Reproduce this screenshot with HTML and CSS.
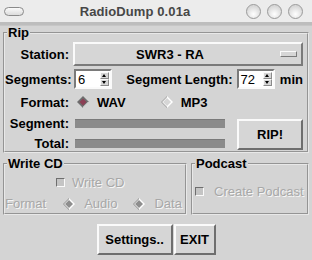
FILE: index.html
```html
<!DOCTYPE html>
<html lang="en">

<head>
    <meta charset="UTF-8">
    <title>RadioDump 0.01a</title>
    <link rel="stylesheet" href="styles.css">
</head>

<body>
    <div class="window">
        <div class="titlebar">
            <span class="pill"></span>
            <span class="title">RadioDump 0.01a</span>
            <span class="dots"><i></i><i></i><i></i></span>
        </div>
        <div class="band"></div>

        <div class="content">
            <fieldset class="group rip">
                <legend>Rip</legend>

                <div class="row station">
                    <span class="label">Station:</span>
                    <div class="combo">SWR3 - RA<span class="indicator"></span></div>
                </div>

                <div class="row segments">
                    <span class="label">Segments:</span>
                    <div class="spin small"><span class="val">6</span><span class="arrows"><b class="up"></b><b class="down"></b></span></div>
                    <span class="label seglen">Segment Length:</span>
                    <div class="spin"><span class="val">72</span><span class="arrows"><b class="up"></b><b class="down"></b></span></div>
                    <span class="label unit">min</span>
                </div>

                <div class="row format">
                    <span class="label">Format:</span>
                    <svg class="radio" width="12" height="12" viewBox="0 0 12 12">
                        <polygon points="6,0 12,6 6,12 0,6" fill="#6e6e6e" />
                        <polygon points="6,12 12,6 11,6 6,11" fill="#ffffff" />
                        <polygon points="6,2.5 9.5,6 6,9.5 2.5,6" fill="#8c3f55" />
                    </svg>
                    <span class="opt">WAV</span>
                    <svg class="radio mp3" width="12" height="12" viewBox="0 0 12 12">
                        <polygon points="6,0 12,6 6,12 0,6" fill="#ffffff" />
                        <polygon points="6,0 0,6 6,12 6,11 1,6 6,1" fill="#8a8a8a" />
                        <polygon points="6,2 10,6 6,10 2,6" fill="#d6d6d6" />
                    </svg>
                    <span class="opt">MP3</span>
                </div>

                <div class="progress">
                    <div class="bars">
                        <div class="row">
                            <span class="label">Segment:</span>
                            <div class="bar"></div>
                        </div>
                        <div class="row">
                            <span class="label">Total:</span>
                            <div class="bar"></div>
                        </div>
                    </div>
                    <div class="btn rip-btn">RIP!</div>
                </div>
            </fieldset>

            <div class="lower">
                <fieldset class="group cd">
                    <legend>Write CD</legend>
                    <div class="check-row center">
                        <span class="box"></span>
                        <span class="off">Write CD</span>
                    </div>
                    <div class="cd-format">
                        <span class="off">Format</span>
                        <svg class="radio" width="12" height="12" viewBox="0 0 12 12">
                            <polygon points="6,0 12,6 6,12 0,6" fill="#ffffff" />
                            <polygon points="6,0 0,6 6,12 6,11 1,6 6,1" fill="#7a7a7a" />
                            <polygon points="6,2 10,6 6,10 2,6" fill="#8e8e8e" />
                        </svg>
                        <span class="off">Audio</span>
                        <svg class="radio" width="12" height="12" viewBox="0 0 12 12">
                            <polygon points="6,0 12,6 6,12 0,6" fill="#ffffff" />
                            <polygon points="6,0 0,6 6,12 6,11 1,6 6,1" fill="#7a7a7a" />
                            <polygon points="6,2 10,6 6,10 2,6" fill="#8e8e8e" />
                        </svg>
                        <span class="off">Data</span>
                    </div>
                </fieldset>
                <fieldset class="group podcast">
                    <legend>Podcast</legend>
                    <div class="check-row">
                        <span class="box"></span>
                        <span class="off">Create Podcast</span>
                    </div>
                </fieldset>
            </div>

            <div class="buttons">
                <div class="btn settings">Settings..</div>
                <div class="btn exit">EXIT</div>
            </div>
        </div>
    </div>
</body>

</html>
```

FILE: styles.css
```css
html,
body {
    margin: 0;
    padding: 0;
}

body {
    font-family: 'Liberation Sans', Arial, sans-serif;
    font-size: 13px;
    color: #000;
}

.window {
    width: 312px;
    height: 260px;
    background: #d4d4d4;
    overflow: hidden;
}

/* title bar */
.titlebar {
    height: 22px;
    background: #ececec;
    display: flex;
    align-items: center;
}

.pill {
    width: 18px;
    height: 7px;
    margin-left: 4px;
    border: 1px solid #8a8a8a;
    border-radius: 5px;
    background: linear-gradient(#fafafa, #dcdcdc);
}

.title {
    flex: 1;
    text-align: center;
    font-weight: bold;
    color: #474747;
    letter-spacing: 0.1px;
}

.dots {
    display: flex;
    gap: 6px;
    margin-right: 9px;
}

.dots i {
    width: 13px;
    height: 13px;
    border-radius: 50%;
    border: 1px solid #9a9a9a;
    background: radial-gradient(circle at 50% 70%, #ffffff, #d8d8d8 70%);
}

.band {
    height: 3px;
    background: #bdbdbd;
    border-bottom: 1px solid #c6c6c6;
}

.content {
    padding: 0 3px;
}

/* group boxes */
.group {
    margin: 0;
    padding: 0 4px 0 0;
    border: 2px groove #e8e8e8;
    min-width: 0;
    box-sizing: border-box;
}

.group legend {
    font-weight: bold;
    line-height: 13px;
    padding: 0 1px;
    margin-left: 2px;
}

.rip {
    height: 127px;
}

.row {
    display: flex;
    align-items: center;
}

.label {
    width: 64px;
    text-align: right;
    font-weight: bold;
    flex: none;
}

.station {
    margin-top: 3px;
    height: 24px;
}

.combo {
    margin-left: 4px;
    flex: 1;
    height: 20px;
    border: 2px solid;
    border-color: #fafafa #7a7a7a #7a7a7a #fafafa;
    background: #d6d6d6;
    font-weight: bold;
    display: flex;
    align-items: center;
    justify-content: center;
    padding-right: 36px;
    position: relative;
}

.indicator {
    position: absolute;
    right: 4px;
    top: 7px;
    width: 15px;
    height: 4px;
    border: 1px solid;
    border-color: #fafafa #7a7a7a #7a7a7a #fafafa;
    background: #d6d6d6;
}

.segments {
    margin-top: 2px;
    height: 22px;
}

.spin {
    margin-left: 5px;
    width: 38px;
    height: 16px;
    border: 2px solid;
    border-color: #7a7a7a #fafafa #fafafa #7a7a7a;
    background: #fff;
    display: flex;
    align-items: center;
    justify-content: space-between;
    padding: 0 1px 0 2px;
}

.spin .val {
    font-weight: normal;
}

.arrows {
    display: flex;
    flex-direction: column;
    width: 9px;
    height: 14px;
    background: #d6d6d6;
}

.arrows b {
    flex: 1;
    position: relative;
    border: 1px solid;
    border-color: #fafafa #8a8a8a #8a8a8a #fafafa;
}

.arrows b::after {
    content: '';
    position: absolute;
    left: 1px;
    top: 1px;
    border-left: 2.5px solid transparent;
    border-right: 2.5px solid transparent;
}

.arrows .up::after {
    border-bottom: 3px solid #000;
}

.arrows .down::after {
    border-top: 3px solid #000;
}

.seglen {
    width: auto;
    margin-left: 14px;
}

.segments .spin:nth-of-type(2) {
    margin-left: 4px;
}

.unit {
    width: auto;
    margin-left: 5px;
}

.format {
    height: 16px;
    margin-top: 4px;
}

.radio {
    flex: none;
    margin-left: 8px;
}

.opt {
    font-weight: bold;
    margin-left: 8px;
}

.format .mp3 {
    margin-left: 35px;
}

.progress {
    display: flex;
    margin-top: 5px;
}

.bars {
    display: flex;
    flex-direction: column;
    gap: 4px;
}

.bars .row {
    height: 16px;
}

.bar {
    margin-left: 6px;
    width: 150px;
    height: 8px;
    background: #8b8b8b;
    border-top: 1px solid #7a7a7a;
}

.btn {
    border: 2px solid;
    border-color: #fafafa #6e6e6e #6e6e6e #fafafa;
    background: #d6d6d6;
    font-weight: bold;
    display: flex;
    align-items: center;
    justify-content: center;
    box-sizing: border-box;
}

.rip-btn {
    margin-left: 12px;
    margin-top: 4px;
    width: 69px;
    height: 31px;
}

/* lower groups */
.lower {
    display: flex;
    gap: 4px;
    margin-top: 4px;
}

.cd {
    width: 184px;
    height: 58px;
    flex: none;
}

.podcast {
    flex: 1;
    height: 58px;
    padding-right: 0;
}

.off {
    color: #a8a8a8;
    text-shadow: 1px 1px 0 #f6f6f6;
    white-space: nowrap;
}

.box {
    width: 7px;
    height: 7px;
    border: 1px solid;
    border-color: #6e6e6e #fafafa #fafafa #6e6e6e;
    background: #c4c4c4;
    flex: none;
}

.check-row {
    display: flex;
    align-items: center;
    gap: 10px;
    padding-left: 2px;
}

.check-row.center {
    margin-top: 5px;
    padding-left: 51px;
    gap: 7px;
}

.cd-format {
    display: flex;
    align-items: center;
    margin-top: 6px;
}

.cd-format .radio {
    margin-left: 17px;
    margin-right: 9px;
}

.cd-format .radio:last-of-type {
    margin-left: 16px;
}

.podcast .check-row {
    margin-top: 14px;
}

.buttons {
    display: flex;
    justify-content: center;
    gap: 1px;
    margin-top: 9px;
}

.settings {
    width: 76px;
    height: 31px;
}

.exit {
    width: 42px;
    height: 31px;
}
```
